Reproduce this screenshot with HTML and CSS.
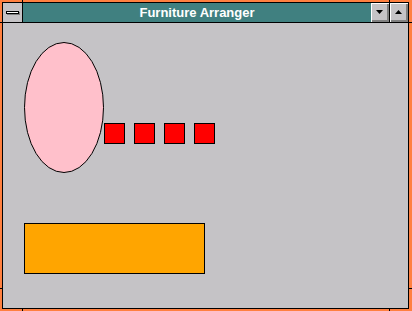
FILE: index.html
```html
<!DOCTYPE html>
<html>
<head>
<meta charset="utf-8">
<link rel="stylesheet" href="styles.css">
</head>
<body>
<div class="window">
  <div class="frame">
    <div class="titlebar">
      <div class="sysmenu"><span class="sysbar"></span></div>
      <div class="title">Furniture Arranger</div>
      <div class="btn"><svg width="7" height="4" viewBox="0 0 7 4"><polygon points="0,0 7,0 3.5,4" fill="#000"/></svg></div>
      <div class="btn btn-max"><svg width="7" height="4" viewBox="0 0 7 4"><polygon points="0,4 7,4 3.5,0" fill="#000"/></svg></div>
    </div>
    <div class="client">
      <svg class="canvas" width="405" height="285" viewBox="0 0 405 285">
        <ellipse cx="61" cy="84.5" rx="39.5" ry="65" fill="#ffc0cb" stroke="#000" stroke-width="1"/>
        <rect x="101.5" y="100.5" width="20" height="20" fill="#ff0000" stroke="#000"/>
        <rect x="131.5" y="100.5" width="20" height="20" fill="#ff0000" stroke="#000"/>
        <rect x="161.5" y="100.5" width="20" height="20" fill="#ff0000" stroke="#000"/>
        <rect x="191.5" y="100.5" width="20" height="20" fill="#ff0000" stroke="#000"/>
        <rect x="21.5" y="200.5" width="180" height="50" fill="#ffa500" stroke="#000"/>
      </svg>
    </div>
  </div>
  <span class="tick tick-v tick-top tick-l"></span>
  <span class="tick tick-v tick-top tick-r"></span>
  <span class="tick tick-v tick-bot tick-l"></span>
  <span class="tick tick-v tick-bot tick-r"></span>
  <span class="tick tick-h tick-left tick-t"></span>
  <span class="tick tick-h tick-left tick-b"></span>
  <span class="tick tick-h tick-right tick-t"></span>
  <span class="tick tick-h tick-right tick-b"></span>
</div>
</body>
</html>
```
FILE: styles.css
```css
html, body {
  margin: 0;
  padding: 0;
  background: #c5c3c6;
}
.window {
  position: relative;
  width: 412px;
  height: 311px;
  box-sizing: border-box;
  padding: 2px 3px 2px 2px;
  background: #ff8040;
}
.frame {
  height: 100%;
  box-sizing: border-box;
  border: 1px solid #000;
  display: flex;
  flex-direction: column;
}
.titlebar {
  height: 19px;
  border-bottom: 1px solid #000;
  background: #408080;
  display: flex;
}
.sysmenu {
  width: 19px;
  border-right: 1px solid #000;
  background: #c5c3c6;
  box-sizing: content-box;
  display: flex;
  align-items: flex-start;
  padding: 8px 0 0 3px;
  box-sizing: border-box;
  width: 20px;
}
.sysbar {
  display: block;
  width: 11px;
  height: 1px;
  border: 1px solid #000;
  background: #fff;
  box-shadow: 1px 1px 0 #808080;
}
.title {
  flex: 1;
  text-align: center;
  color: #fff;
  font-family: "Liberation Sans", Arial, sans-serif;
  font-weight: bold;
  font-size: 13px;
  line-height: 19px;
}
.btn {
  width: 18px;
  height: 19px;
  background: #c5c3c6;
  box-shadow: inset 1px 1px 0 #fff, inset -2px -2px 0 #808080;
  display: flex;
  align-items: center;
  justify-content: center;
}
.btn svg {
  display: block;
  margin: -1px 1px 0 0;
}
.btn-max {
  border-left: 1px solid #000;
}
.client {
  flex: 1;
  background: #c5c3c6;
}
.canvas {
  display: block;
}
.tick {
  position: absolute;
  background: #000;
}
.tick-v { width: 1px; height: 2px; }
.tick-h { width: 2px; height: 1px; }
.tick-top { top: 0; }
.tick-bot { bottom: 0; }
.tick-l { left: 22px; }
.tick-r { left: 389px; }
.tick-left { left: 0; }
.tick-right { right: 0; width: 3px; }
.tick-t { top: 22px; }
.tick-b { top: 288px; }
```
